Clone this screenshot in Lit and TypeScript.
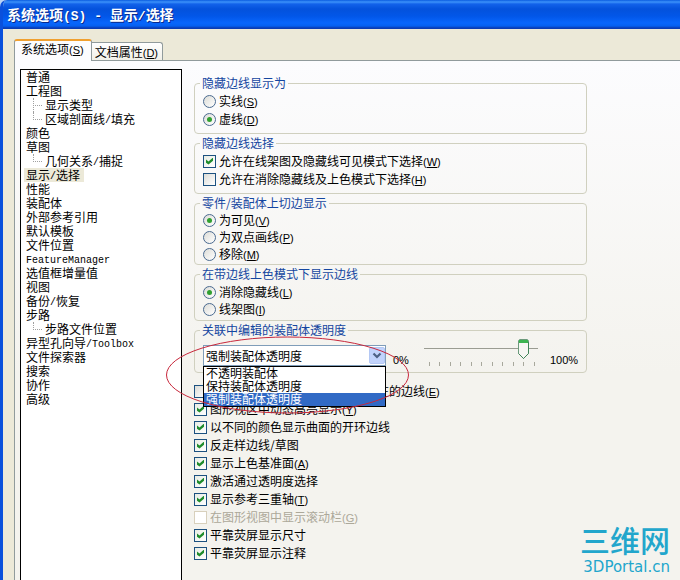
import { LitElement, html, css, svg, nothing } from "lit";
import { customElement, state } from "lit/decorators.js";
import { classMap } from "lit/directives/class-map.js";

interface PageEntry {
  text: string;
  latin?: string;
  rest?: string;
  child?: boolean;
}

interface Choice {
  text: string;
  key?: string;
  on?: boolean;
  disabled?: boolean;
  covered?: boolean;
}

const PAGES: PageEntry[] = [
  { text: "普通" },
  { text: "工程图" },
  { text: "显示类型", child: true },
  { text: "区域剖面线", latin: "/", rest: "填充", child: true },
  { text: "颜色" },
  { text: "草图" },
  { text: "几何关系", latin: "/", rest: "捕捉", child: true },
  { text: "显示", latin: "/", rest: "选择" },
  { text: "性能" },
  { text: "装配体" },
  { text: "外部参考引用" },
  { text: "默认模板" },
  { text: "文件位置" },
  { text: "", latin: "FeatureManager" },
  { text: "选值框增量值" },
  { text: "视图" },
  { text: "备份", latin: "/", rest: "恢复" },
  { text: "步路" },
  { text: "步路文件位置", child: true },
  { text: "异型孔向导", latin: "/Toolbox" },
  { text: "文件探索器" },
  { text: "搜索" },
  { text: "协作" },
  { text: "高级" },
];

const HIDDEN_DISPLAY: Choice[] = [
  { text: "实线", key: "S" },
  { text: "虚线", key: "D", on: true },
];
const HIDDEN_SELECT: Choice[] = [
  { text: "允许在线架图及隐藏线可见模式下选择", key: "W", on: true },
  { text: "允许在消除隐藏线及上色模式下选择", key: "H" },
];
const TANGENT: Choice[] = [
  { text: "为可见", key: "V", on: true },
  { text: "为双点画线", key: "P" },
  { text: "移除", key: "M" },
];
const SHADED: Choice[] = [
  { text: "消除隐藏线", key: "L", on: true },
  { text: "线架图", key: "I" },
];
const GENERAL: Choice[] = [
  { text: "在的边线", key: "E", covered: true },
  { text: "图形视区中动态高亮显示", key: "Y", on: true },
  { text: "以不同的颜色显示曲面的开环边线", on: true },
  { text: "反走样边线/草图", on: true },
  { text: "显示上色基准面", key: "A", on: true },
  { text: "激活通过透明度选择", on: true },
  { text: "显示参考三重轴", key: "T", on: true },
  { text: "在图形视图中显示滚动栏", key: "G", disabled: true },
  { text: "平靠荧屏显示尺寸", on: true },
  { text: "平靠荧屏显示注释", on: true },
];
const TRANSPARENCY = ["不透明装配体", "保持装配体透明度", "强制装配体透明度"];

@customElement("app-root")
export class AppRoot extends LitElement {
  @state() private page = 7;
  @state() private mode = 2;

  static styles = css`
    :host {
      display: block;
      height: 100vh;
      overflow: hidden;
      font: 12px/14px "Noto Sans CJK SC", sans-serif;
      color: #000;
      background: #b9d3f5;
    }
    * {
      box-sizing: border-box;
    }
    .window {
      position: relative;
      display: flex;
      flex-direction: column;
      height: 100%;
      background: #ece9d8;
      border-left: 3px solid #0a50dc;
      border-top-left-radius: 7px;
      overflow: hidden;
    }
    .title {
      flex: none;
      height: 29px;
      margin: 0 0 0 -3px;
      padding: 1px 0 0 7px;
      font-size: 14px;
      line-height: 26px;
      font-weight: 700;
      color: #fff;
      text-shadow: 1px 1px 0 #0a2a8c;
      white-space: pre;
      background: linear-gradient(#0a5ce0 0, #3c92fa 2px, #1262ea 4px, #0452dc 9px, #0256e8 16px, #0866fc 23px, #0560f0 26px, #0a3cb4 28px, #0a3cb4 29px);
    }
    .mono {
      font-family: "Liberation Mono", monospace;
      font-size: 10px;
    }
    .title .mono {
      font-size: 13px;
    }
    .pages .mono {
      vertical-align: 1px;
      line-height: 12px;
    }
    .key {
      font-family: "Liberation Sans", sans-serif;
      font-size: 11px;
    }
    .tabs {
      flex: none;
      display: flex;
      align-items: flex-end;
      height: 32px;
      padding-left: 11px;
      position: relative;
      z-index: 1;
      margin-bottom: -1px;
    }
    .tab {
      font: inherit;
      height: 18px;
      margin: 0 0 1px;
      padding: 1px 4px 0 3px;
      border: 1px solid #919b9c;
      border-left: 0;
      border-bottom: 0;
      border-radius: 0 3px 0 0;
      background: linear-gradient(#fff, #f1f0e8);
      white-space: nowrap;
    }
    .tab.active {
      height: 22px;
      margin: 0;
      padding: 0 7px 3px 6px;
      border-left: 1px solid #919b9c;
      border-top: 2px solid #f0a030;
      border-radius: 3px 3px 0 0;
      background: #fcfcfe;
    }
    .panel {
      flex: 1;
      min-height: 0;
      display: flex;
      gap: 12px;
      margin-left: 11px;
      padding: 8px 93px 0 5px;
      border-top: 1px solid #919b9c;
      border-left: 1px solid #919b9c;
      background: linear-gradient(#fcfcfe, #f4f3ee 60%);
    }
    .pages {
      flex: none;
      width: 162px;
      margin: 0;
      padding: 0 3px;
      list-style: none;
      background: #fff;
      border: 1px solid #000;
      border-bottom: 0;
    }
    .pages li {
      display: flex;
      height: 14px;
    }
    .pages .child {
      position: relative;
      padding-left: 19px;
    }
    .pages .child::before,
    .pages .child::after {
      content: "";
      position: absolute;
      left: 9px;
      top: 0;
      height: 14px;
      border-left: 1px dotted #a0a0a0;
    }
    .pages .child::after {
      top: 7px;
      width: 9px;
      height: 0;
      border-left: 0;
      border-top: 1px dotted #a0a0a0;
    }
    .pages .child.last::before {
      height: 8px;
    }
    .page {
      font: inherit;
      height: 14px;
      padding: 0 2px;
      border: 0;
      background: none;
      white-space: nowrap;
    }
    .page.selected {
      background: #ece9d8;
      padding-right: 4px;
    }
    .form {
      flex: 1;
      min-width: 0;
      display: flex;
      flex-direction: column;
      gap: 2px;
      padding-top: 7px;
    }
    fieldset {
      min-width: 0;
      margin: 0;
      padding: 2px 8px 5px;
      border: 1px solid #d0d0bf;
      border-radius: 4px;
    }
    legend {
      margin-left: -3px;
      padding: 0 2px;
      height: 14px;
      color: #1446a0;
      white-space: nowrap;
    }
    .tight {
      padding-bottom: 1px;
    }
    .low {
      padding: 3px 8px 2px;
    }
    .row {
      display: flex;
      align-items: center;
      gap: 3px;
      height: 18px;
      white-space: nowrap;
    }
    .dense .row {
      height: 17px;
    }
    .row.disabled {
      color: #aca899;
    }
    .covered > span {
      padding-left: 167px;
    }
    input[type="checkbox"],
    input[type="radio"] {
      appearance: none;
      flex: none;
      width: 13px;
      height: 13px;
      margin: 0;
      border: 1px solid #1c5180;
      background: linear-gradient(135deg, #dcdcd7, #fff);
    }
    input[type="radio"] {
      border-color: #4a6a90;
      border-radius: 50%;
      display: grid;
      place-content: center;
    }
    input[type="radio"]:checked::before {
      content: "";
      width: 5px;
      height: 5px;
      border-radius: 50%;
      background: #30a030;
    }
    input[type="checkbox"]:checked {
      background: linear-gradient(135deg, #e8ece4, #fff);
    }
    input[type="checkbox"]:checked::before {
      content: "";
      display: block;
      width: 7px;
      height: 7px;
      margin: 2px;
      background: #1f8c2c;
      clip-path: polygon(0 28%, 36% 58%, 100% 0, 100% 46%, 36% 100%, 0 74%);
    }
    input[type="checkbox"]:disabled {
      border-color: #d8d0bc;
      background: #fff;
    }
    .general {
      display: flex;
      flex-direction: column;
      padding-top: 7px;
    }
    .blend {
      position: relative;
      display: flex;
      height: 35px;
      padding-top: 8px;
    }
    .transparency {
      position: relative;
      z-index: 1;
      padding: 0 8px;
    }
    .combo {
      position: relative;
      flex: none;
      width: 183px;
      height: 21px;
    }
    .combo select {
      appearance: none;
      display: block;
      width: 100%;
      height: 21px;
      margin: 0;
      padding: 0 20px 0 2px;
      font: inherit;
      color: #000;
      background: #fff;
      border: 1px solid #7f9db9;
      border-radius: 0;
    }
    .arrow {
      position: absolute;
      right: 1px;
      top: 2px;
      width: 16px;
      height: 17px;
      pointer-events: none;
    }
    .menu {
      position: absolute;
      left: 0;
      right: 0;
      top: 21px;
      margin: 0;
      padding: 0;
      list-style: none;
      background: #fff;
      border: 1px solid #000;
    }
    .menu li {
      height: 13px;
      padding: 0 2px;
      line-height: 12px;
    }
    .menu .chosen {
      color: #fff;
      background: #316ac5;
    }
    .min {
      padding: 8px 0 0 7px;
    }
    .max {
      padding: 8px 0 0 10px;
    }
    .slider {
      flex: none;
      width: 116px;
      margin: -6px 0 0 15px;
    }
    .slider input {
      appearance: none;
      display: block;
      width: 100%;
      height: 20px;
      margin: 0;
      background: linear-gradient(#9a9c92, #9a9c92) 0 9px / 114px 1px no-repeat;
    }
    .slider input::-webkit-slider-thumb {
      appearance: none;
      width: 11px;
      height: 20px;
      background: url("data:image/svg+xml,%3Csvg xmlns='http://www.w3.org/2000/svg' width='11' height='20'%3E%3Cpath d='M.5 1.5L1.5 .5H9.5L10.5 1.5V14.5L5.5 19.5L.5 14.5Z' fill='%23f6f6f2' stroke='%236c9a7c'/%3E%3Cpath d='M10.5 3V14.5L5.5 19.5L.5 14.5' fill='none' stroke='%23408458'/%3E%3Cpath d='M1 1H10V4H1Z' fill='%233cb450'/%3E%3C/svg%3E") no-repeat;
    }
    .ticks {
      display: flex;
      justify-content: space-between;
      padding: 0 5px;
      margin-top: 3px;
    }
    .ticks i {
      width: 1px;
      height: 4px;
      background: #a8a89c;
    }
    .ring {
      position: absolute;
      left: -37px;
      top: -1px;
      width: 243px;
      height: 78px;
      pointer-events: none;
    }
    .brand {
      position: absolute;
      right: 10px;
      bottom: 4px;
      color: #22a6cc;
      text-align: right;
    }
    .brand strong {
      display: block;
      font-size: 30px;
      line-height: 38px;
      font-weight: 500;
    }
    .brand span {
      display: block;
      font: 15px/18px "DejaVu Sans", sans-serif;
    }
  `;

  private key(k?: string) {
    return k ? html`<span class="key">(<u>${k}</u>)</span>` : nothing;
  }

  private choices(items: Choice[], type: "radio" | "checkbox", name: string) {
    return items.map(
      (c) => html`<label class=${classMap({ row: true, disabled: !!c.disabled, covered: !!c.covered })}
        ><input type=${type} name=${name} .checked=${!!c.on} ?disabled=${!!c.disabled} /><span
          >${c.text}${this.key(c.key)}</span
        ></label
      >`
    );
  }

  private pageRow(p: PageEntry, i: number) {
    const last = !!p.child && !PAGES[i + 1]?.child;
    return html`<li class=${classMap({ child: !!p.child, last })}>
      <button
        class=${classMap({ page: true, selected: i === this.page })}
        @click=${() => (this.page = i)}
      >${p.text}${p.latin ? html`<span class="mono">${p.latin}</span>` : nothing}${p.rest ?? nothing}</button>
    </li>`;
  }

  render() {
    return html`
      <main class="window">
        <header class="title">系统选项<span class="mono">(S) - </span>显示<span class="mono">/</span>选择</header>
        <nav class="tabs">
          <button class="tab active">系统选项${this.key("S")}</button>
          <button class="tab">文档属性${this.key("D")}</button>
        </nav>
        <section class="panel">
          <ul class="pages">
            ${PAGES.map((p, i) => this.pageRow(p, i))}
          </ul>
          <form class="form">
            <fieldset>
              <legend>隐藏边线显示为</legend>
              ${this.choices(HIDDEN_DISPLAY, "radio", "hidden-display")}
            </fieldset>
            <fieldset>
              <legend>隐藏边线选择</legend>
              ${this.choices(HIDDEN_SELECT, "checkbox", "hidden-select")}
            </fieldset>
            <fieldset class="dense tight">
              <legend>零件/装配体上切边显示</legend>
              ${this.choices(TANGENT, "radio", "tangent")}
            </fieldset>
            <fieldset class="dense low">
              <legend>在带边线上色模式下显示边线</legend>
              ${this.choices(SHADED, "radio", "shaded")}
            </fieldset>
            <fieldset class="transparency">
              <legend id="blend-name">关联中编辑的装配体透明度</legend>
              <div class="blend">
                <div class="combo">
                  <select
                    aria-labelledby="blend-name"
                    @change=${(e: Event) => (this.mode = (e.target as HTMLSelectElement).selectedIndex)}
                  >
                    ${TRANSPARENCY.map((t, i) => html`<option ?selected=${i === this.mode}>${t}</option>`)}
                  </select>
                  <svg class="arrow" viewBox="0 0 16 17" aria-hidden="true">
                    <rect x=".5" y=".5" width="15" height="16" rx="1.5" fill="#c2d3fc" stroke="#b4c8f4" />
                    <path d="M4.5 6.5l3.5 3.5l3.5-3.5" fill="none" stroke="#4d6185" stroke-width="2.2" />
                  </svg>
                  <ul class="menu" role="listbox" aria-labelledby="blend-name">
                    ${TRANSPARENCY.map(
                      (t, i) => html`<li
                        role="option"
                        aria-selected=${i === this.mode}
                        class=${classMap({ chosen: i === this.mode })}
                        @click=${() => (this.mode = i)}
                      >${t}</li>`
                    )}
                  </ul>
                </div>
                <span class="key min">0%</span>
                <div class="slider">
                  <input type="range" min="0" max="100" value="90" aria-labelledby="blend-name" />
                  <div class="ticks">${Array.from({ length: 11 }, () => html`<i></i>`)}</div>
                </div>
                <span class="key max">100%</span>
                <svg class="ring" viewBox="0 0 243 78" aria-hidden="true">
                  ${svg`<ellipse cx="121.5" cy="39" rx="121" ry="38" fill="none" stroke="#c8283c" />`}
                </svg>
              </div>
            </fieldset>
            <div class="general">${this.choices(GENERAL, "checkbox", "general")}</div>
          </form>
        </section>
        <aside class="brand"><strong>三维网</strong><span>3DPortal.cn</span></aside>
      </main>
    `;
  }
}
